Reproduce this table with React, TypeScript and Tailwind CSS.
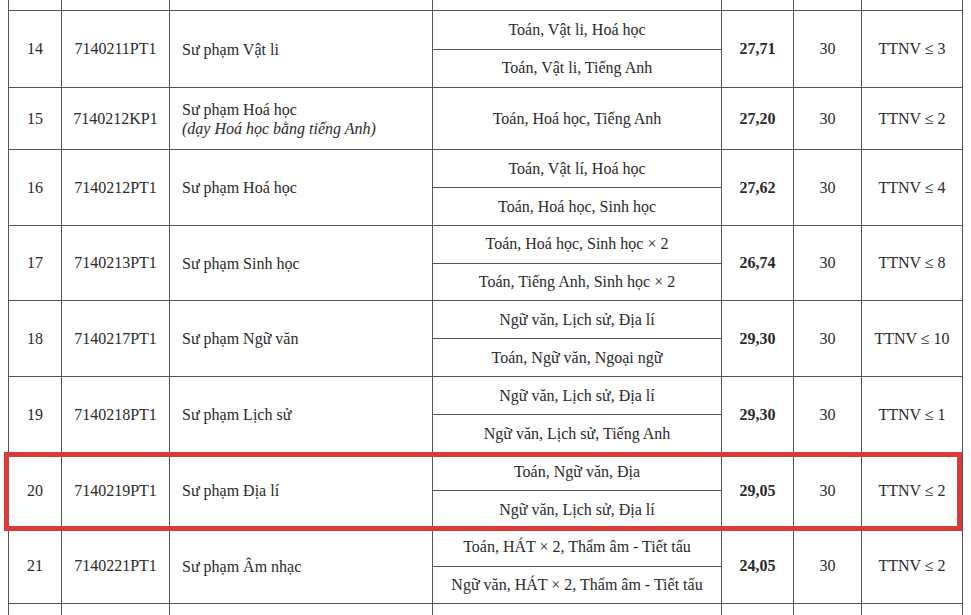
type Row = {
  stt: string;
  code: string;
  name: string;
  note?: string;
  combos: string[];
  score: string;
  quota: string;
  rule: string;
  h: string;
};

const rows: Row[] = [
  {
    stt: "14",
    code: "7140211PT1",
    name: "Sư phạm Vật li",
    combos: ["Toán, Vật li, Hoá học", "Toán, Vật li, Tiếng Anh"],
    score: "27,71",
    quota: "30",
    rule: "TTNV ≤ 3",
    h: "h-[77px]",
  },
  {
    stt: "15",
    code: "7140212KP1",
    name: "Sư phạm Hoá học",
    note: "(dạy Hoá học bằng tiếng Anh)",
    combos: ["Toán, Hoá học, Tiếng Anh"],
    score: "27,20",
    quota: "30",
    rule: "TTNV ≤ 2",
    h: "h-[62px]",
  },
  {
    stt: "16",
    code: "7140212PT1",
    name: "Sư phạm Hoá học",
    combos: ["Toán, Vật lí, Hoá học", "Toán, Hoá học, Sinh học"],
    score: "27,62",
    quota: "30",
    rule: "TTNV ≤ 4",
    h: "h-[76px]",
  },
  {
    stt: "17",
    code: "7140213PT1",
    name: "Sư phạm Sinh học",
    combos: ["Toán, Hoá học, Sinh học × 2", "Toán, Tiếng Anh, Sinh học × 2"],
    score: "26,74",
    quota: "30",
    rule: "TTNV ≤ 8",
    h: "h-[75px]",
  },
  {
    stt: "18",
    code: "7140217PT1",
    name: "Sư phạm Ngữ văn",
    combos: ["Ngữ văn, Lịch sử, Địa lí", "Toán, Ngữ văn, Ngoại ngữ"],
    score: "29,30",
    quota: "30",
    rule: "TTNV ≤ 10",
    h: "h-[76px]",
  },
  {
    stt: "19",
    code: "7140218PT1",
    name: "Sư phạm Lịch sử",
    combos: ["Ngữ văn, Lịch sử, Địa lí", "Ngữ văn, Lịch sử, Tiếng Anh"],
    score: "29,30",
    quota: "30",
    rule: "TTNV ≤ 1",
    h: "h-[76px]",
  },
  {
    stt: "20",
    code: "7140219PT1",
    name: "Sư phạm Địa lí",
    combos: ["Toán, Ngữ văn, Địa", "Ngữ văn, Lịch sử, Địa lí"],
    score: "29,05",
    quota: "30",
    rule: "TTNV ≤ 2",
    h: "h-[76px]",
  },
  {
    stt: "21",
    code: "7140221PT1",
    name: "Sư phạm Âm nhạc",
    combos: [
      "Toán, HÁT × 2, Thẩm âm - Tiết tấu",
      "Ngữ văn, HÁT × 2, Thẩm âm - Tiết tấu",
    ],
    score: "24,05",
    quota: "30",
    rule: "TTNV ≤ 2",
    h: "h-[75px]",
  },
];

const grid =
  "grid grid-cols-[53px_108px_263px_289px_72px_68px_101px] border-l border-[#555]";
const cell = "border-r border-[#555] flex items-center justify-center";

function EmptyRow({ className }: { className: string }) {
  return (
    <div className={`${grid} ${className}`}>
      <div className={cell} />
      <div className={cell} />
      <div className={cell} />
      <div className={cell} />
      <div className={cell} />
      <div className={cell} />
      <div className={cell} />
    </div>
  );
}

export default function App() {
  return (
    <div
      className="relative w-[971px] h-[615px] overflow-hidden bg-white text-[16px] text-[#2a2a2a]"
      style={{ fontFamily: '"Liberation Serif", "Times New Roman", serif' }}
    >
      <div className="pl-2 w-[963px]">
        <EmptyRow className="h-[11px] border-b" />
        {rows.map((r) => (
          <div key={r.stt} className={`${grid} border-b ${r.h}`}>
            <div className={cell}>{r.stt}</div>
            <div className={cell}>{r.code}</div>
            <div className="border-r border-[#555] flex flex-col justify-center pl-3 leading-[19px]">
              <span>{r.name}</span>
              {r.note && <span className="italic">{r.note}</span>}
            </div>
            <div className="border-r border-[#555] flex flex-col">
              {r.combos.map((c, i) => (
                <div
                  key={c}
                  className={`flex-1 flex items-center justify-center ${
                    i < r.combos.length - 1 ? "border-b border-[#555]" : ""
                  }`}
                >
                  {c}
                </div>
              ))}
            </div>
            <div className={`${cell} font-bold`}>{r.score}</div>
            <div className={cell}>{r.quota}</div>
            <div className={cell}>{r.rule}</div>
          </div>
        ))}
        <EmptyRow className="h-[20px]" />
      </div>
      <div className="absolute left-[4px] top-[452px] w-[958px] h-[79px] border-[5px] border-[#d93a3a]" />
    </div>
  );
}
